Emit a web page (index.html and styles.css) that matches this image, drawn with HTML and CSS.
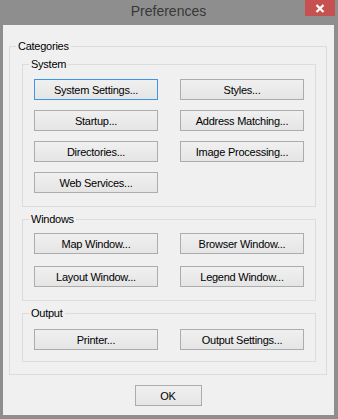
FILE: index.html
```html
<!DOCTYPE html>
<html lang="en">
<head>
  <meta charset="UTF-8">
  <title>Preferences</title>
  <link rel="stylesheet" href="styles.css">
</head>
<body>
  <div class="window">
    <div class="titlebar">
      <span class="title">Preferences</span>
      <button class="close-btn" aria-label="Close">
        <svg width="10" height="9" viewBox="0 0 10 9">
          <path d="M1.5 1 L8.5 8 M8.5 1 L1.5 8" stroke="#fff" stroke-width="2.2" fill="none"/>
        </svg>
      </button>
    </div>

    <div class="client">
      <fieldset class="group categories">
        <legend>Categories</legend>
        <div class="group-body">

          <fieldset class="group">
            <legend>System</legend>
            <div class="buttons system">
              <button class="btn focused">System Settings...</button>
              <button class="btn">Styles...</button>
              <button class="btn">Startup...</button>
              <button class="btn">Address Matching...</button>
              <button class="btn">Directories...</button>
              <button class="btn">Image Processing...</button>
              <button class="btn">Web Services...</button>
            </div>
          </fieldset>

          <fieldset class="group">
            <legend>Windows</legend>
            <div class="buttons windows">
              <button class="btn">Map Window...</button>
              <button class="btn">Browser Window...</button>
              <button class="btn">Layout Window...</button>
              <button class="btn">Legend Window...</button>
            </div>
          </fieldset>

          <fieldset class="group">
            <legend>Output</legend>
            <div class="buttons output">
              <button class="btn">Printer...</button>
              <button class="btn">Output Settings...</button>
            </div>
          </fieldset>

        </div>
      </fieldset>

      <div class="footer">
        <button class="btn ok">OK</button>
      </div>
    </div>
  </div>
</body>
</html>
```

FILE: styles.css
```css
* {
  box-sizing: border-box;
}
body {
  margin: 0;
  background: #8e8e8e;
  font-family: "Liberation Sans", Arial, sans-serif;
}
.window {
  width: 338px;
  height: 419px;
  padding: 0 4px 4px 3px;
  background: #8e8e8e;
}
.titlebar {
  position: relative;
  height: 25px;
  text-align: center;
}
.title {
  font-size: 14px;
  line-height: 23px;
  color: #383838;
}
.close-btn {
  position: absolute;
  top: 0;
  right: -1px;
  width: 30px;
  height: 16px;
  padding: 0;
  border: 0;
  background: #c75050;
  display: flex;
  align-items: center;
  justify-content: center;
}
.client {
  height: 390px;
  background: #f0f0f0;
  padding: 15px 7px 0 6px;
}
.group {
  margin: 0;
  padding: 0;
  min-width: 0;
  border: 1px solid #dcdcdc;
}
legend {
  margin-left: 6px;
  padding: 0 2px;
  font-size: 11px;
  line-height: 13px;
  letter-spacing: -0.25px;
  color: #000;
}
.group-body {
  display: flex;
  flex-direction: column;
  gap: 6px;
  padding: 5px 10px 12px 12px;
}
.buttons {
  display: grid;
  grid-template-columns: 124px 124px;
  column-gap: 22px;
  padding: 8px 11px 13px;
}
.system {
  row-gap: 10px;
}
.windows {
  padding-top: 7px;
  row-gap: 12px;
}
.output {
  padding-top: 9px;
  padding-bottom: 11px;
}
.btn {
  height: 21px;
  padding: 0;
  border: 1px solid #acacac;
  background: linear-gradient(#f0f0f0, #e5e5e5);
  font-family: "Liberation Sans", Arial, sans-serif;
  font-size: 11px;
  letter-spacing: -0.25px;
  color: #000;
}
.btn.focused {
  border-color: #3d95ea;
}
.footer {
  display: flex;
  justify-content: center;
  padding-top: 10px;
}
.ok {
  width: 67px;
}
```
